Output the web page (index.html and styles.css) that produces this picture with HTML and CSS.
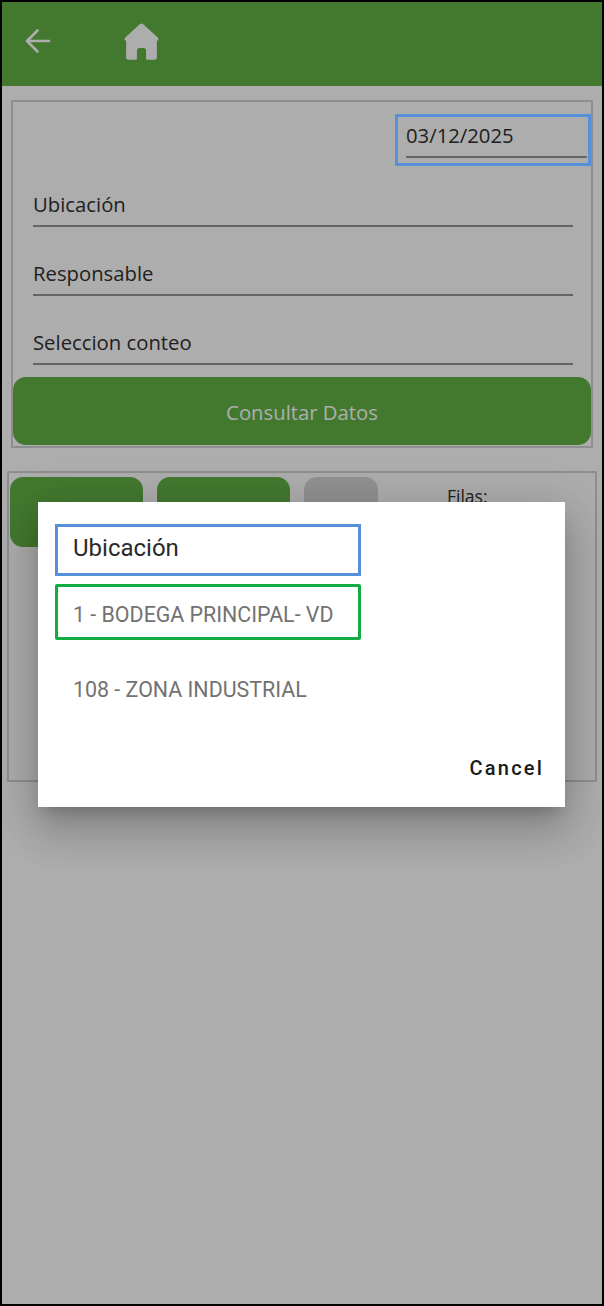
FILE: index.html
```html
<!DOCTYPE html>
<html lang="en">
<head>
    <meta charset="UTF-8">
    <meta name="viewport" content="width=device-width, initial-scale=1.0">
    <title>Conteo</title>
    <link rel="stylesheet" href="styles.css">
</head>
<body>
    <div class="screen">
        <header class="topbar">
            <svg class="icon-back" viewBox="0 0 26 26" width="26" height="26">
                <path d="M24 13H2M12.500 2.500 2 13l10.500 10.500" fill="none" stroke="#fff" stroke-width="2.600" stroke-linecap="round" stroke-linejoin="round"/>
            </svg>
            <svg class="icon-home" viewBox="0 0 36 40" width="35" height="39">
                <path d="M18 1.500c-.6 0-1.100.2-1.500.6L1.600 15.500c-.7.6-1 1.300-1 2.200 0 .8.600 1.500 1.400 1.500H2.200V36.500c0 1.300 1 2.300 2.300 2.300H12c.8 0 1.300-.6 1.300-1.300V29c0-1.200 1-2.300 2.300-2.300h4.800c1.300 0 2.300 1.100 2.300 2.300v8.500c0 .7.500 1.300 1.300 1.300h7.500c1.300 0 2.300-1 2.300-2.300V19.200h.2c.8 0 1.400-.7 1.400-1.500 0-.9-.3-1.600-1-2.200L19.500 2.100c-.4-.4-.9-.6-1.500-.6z" fill="#fff"/>
            </svg>
        </header>

        <section class="filters">
            <div class="date-row">
                <div class="date-field">
                    <span class="field-text">03/12/2025</span>
                    <span class="focus-box"></span>
                </div>
            </div>
            <div class="field"><span class="field-text">Ubicación</span></div>
            <div class="field"><span class="field-text">Responsable</span></div>
            <div class="field"><span class="field-text">Seleccion conteo</span></div>
            <button class="consult-btn">Consultar Datos</button>
        </section>

        <section class="results">
            <div class="action-btn"></div>
            <div class="action-btn"></div>
            <div class="small-btn"></div>
            <div class="rows-label">Filas:</div>
        </section>

        <div class="scrim"></div>

        <div class="dialog">
            <div class="dialog-title">Ubicación</div>
            <div class="option option-selected">1 - BODEGA PRINCIPAL- VD</div>
            <div class="option">108 - ZONA INDUSTRIAL</div>
            <div class="dialog-actions">
                <span class="cancel-btn">Cancel</span>
            </div>
        </div>
    </div>
</body>
</html>
```

FILE: styles.css
```css
* {
    box-sizing: border-box;
}
body {
    margin: 0;
    font-family: 'Open Sans', sans-serif;
    background: #fff;
}
.screen {
    position: relative;
    width: 604px;
    height: 1306px;
    border: 2px solid #000;
    overflow: hidden;
}
.topbar {
    display: flex;
    align-items: center;
    height: 84px;
    padding: 0 0 2px 23px;
    background: #63b346;
}
.icon-back {
    margin-top: -4px;
}
.icon-home {
    margin: -4px 0 0 73px;
}
.filters {
    margin: 14px 9px 0;
    height: 348px;
    border: 2px solid #d2d2d2;
    border-radius: 1px;
}
.date-row {
    display: flex;
    justify-content: flex-end;
    padding-top: 12px;
}
.date-field {
    position: relative;
    width: 196px;
    height: 52px;
    padding: 8px 4px 0 11px;
}
.date-field .field-text {
    display: block;
    height: 36px;
    border-bottom: 2px solid #969696;
    line-height: 26px;
}
.focus-box {
    position: absolute;
    inset: 0;
    z-index: 3;
    border: 3px solid #5590d9;
}
.field {
    margin: 26px 18px 0 20px;
    height: 35px;
    border-bottom: 2px solid #969696;
}
.field + .field {
    margin-top: 34px;
}
.field-text {
    font-size: 20.300px;
    line-height: 24px;
    color: #303030;
}
.consult-btn {
    display: block;
    width: 578px;
    height: 68px;
    margin: 12px 0 0;
    padding: 2px 0 0;
    border: none;
    border-radius: 13px;
    background: #63b346;
    font-family: 'Open Sans', sans-serif;
    font-size: 20.300px;
    color: #fff;
}
.results {
    display: flex;
    gap: 14px;
    margin: 23px 5px 0 5px;
    height: 311px;
    padding: 4px 1px;
    border: 2px solid #d2d2d2;
    border-radius: 1px;
}
.action-btn {
    width: 133px;
    height: 70px;
    border-radius: 13px;
    background: #63b346;
}
.small-btn {
    width: 74px;
    height: 70px;
    border-radius: 13px;
    background: #d6d6d6;
}
.rows-label {
    margin: 7px 0 0 55px;
    font-size: 17.500px;
    line-height: 24px;
    color: #303030;
}
.scrim {
    position: absolute;
    inset: 0;
    z-index: 1;
    background: rgba(0, 0, 0, 0.32);
}
.dialog {
    position: absolute;
    left: 36px;
    top: 500px;
    z-index: 2;
    width: 527px;
    height: 305px;
    padding: 22px 17px 0;
    background: #fff;
    box-shadow: 0 11px 15px -7px rgba(0, 0, 0, 0.2), 0 24px 38px 3px rgba(0, 0, 0, 0.14), 0 9px 46px 8px rgba(0, 0, 0, 0.12);
    font-family: Roboto, sans-serif;
}
.dialog-title {
    width: 306px;
    height: 52px;
    padding-left: 15px;
    border: 3px solid #5590d9;
    font-size: 24px;
    line-height: 43px;
    color: #2a2a2a;
}
.option {
    width: 306px;
    height: 56px;
    padding-left: 18px;
    font-size: 21.400px;
    line-height: 56px;
    color: #727272;
}
.option-selected {
    margin-top: 8px;
    margin-bottom: 22px;
    padding-left: 15px;
    border: 3px solid #13ac42;
    border-radius: 2px;
    line-height: 55px;
}
.dialog-actions {
    display: flex;
    justify-content: flex-end;
    margin-top: 36px;
    padding-right: 4px;
}
.cancel-btn {
    font-size: 20px;
    font-weight: 500;
    line-height: 28px;
    letter-spacing: 2.200px;
    color: #1a1a1a;
}
```
